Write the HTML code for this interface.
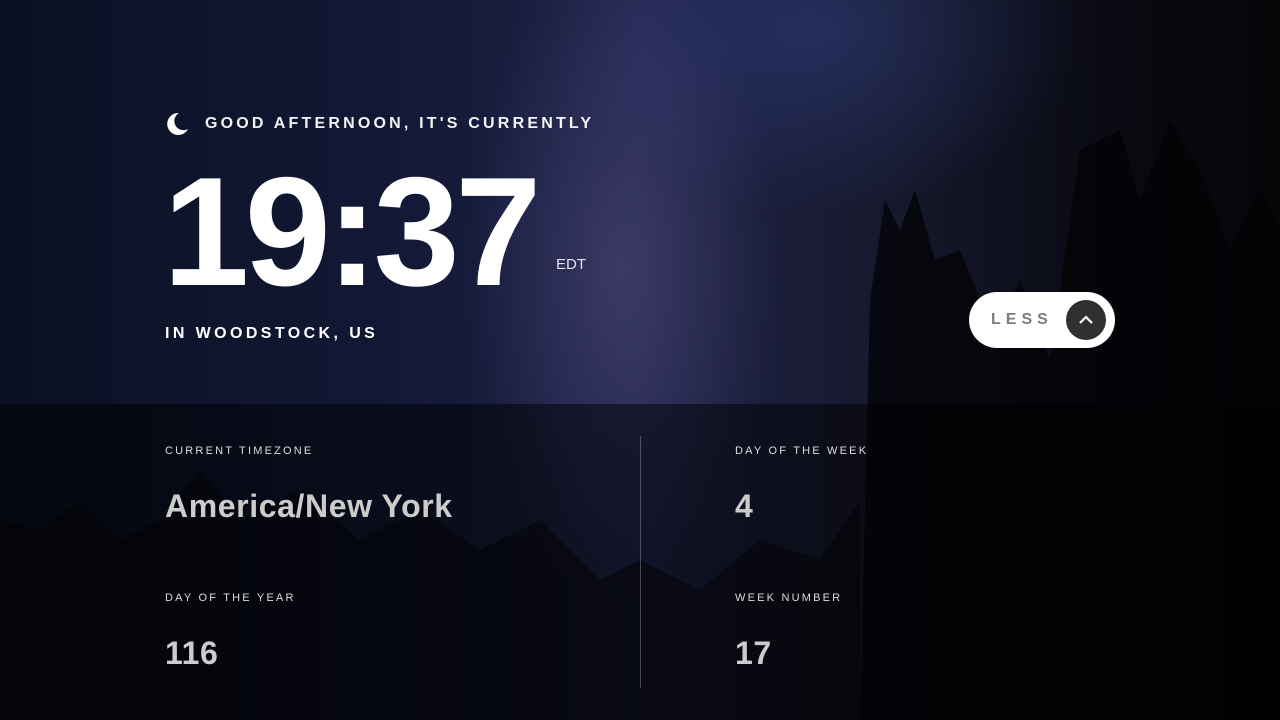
<!DOCTYPE html>
<html><head><style>
*{margin:0;padding:0;box-sizing:border-box}
body{width:1280px;height:720px;overflow:hidden;font-family:"Liberation Sans",sans-serif;color:#fff;position:relative;
background:
radial-gradient(ellipse 220px 480px at 620px 270px,rgba(110,100,160,.35),transparent 70%),
radial-gradient(ellipse 380px 260px at 820px 30px,rgba(50,70,140,.45),transparent 70%),
linear-gradient(90deg,#0a1022 0%,#141a38 35%,#20244a 50%,#16182c 70%,#0a0b14 85%,#060608 100%);}
.trees{position:absolute;left:0;top:0;width:1280px;height:720px}
.panel{position:absolute;left:0;top:404px;width:1280px;height:316px;background:rgba(0,0,0,.5)}
.greet{position:absolute;left:205px;top:115px;font-size:16px;letter-spacing:3.2px;font-weight:bold;opacity:.95}
.moon{position:absolute;left:165px;top:112px}
.time{position:absolute;left:163px;top:154px;font-size:155px;font-weight:bold;letter-spacing:-4.5px;line-height:155px}
.edt{position:absolute;left:556px;top:256px;font-size:15px;opacity:.85}
.loc{position:absolute;left:165px;top:325px;font-size:16px;font-weight:bold;letter-spacing:3.4px}
.btn{position:absolute;left:969px;top:292px;width:146px;height:56px;border-radius:28px;background:#fff}
.btn span{position:absolute;left:22px;top:19px;font-size:16px;font-weight:bold;letter-spacing:5px;color:#7d7d7d}
.btn i{position:absolute;left:97px;top:8px;width:40px;height:40px;border-radius:50%;background:#303030}
.lbl{position:absolute;font-size:11px;letter-spacing:2.2px;color:#ddd}
.val{position:absolute;font-size:32px;font-weight:bold;color:#ccc;letter-spacing:.6px}
.div{position:absolute;left:640px;top:436px;width:1px;height:252px;background:rgba(255,255,255,.25)}
</style></head><body>
<svg class="trees" viewBox="0 0 1280 720">
<g fill="#030305">
<path d="M860 720 L870 300 L885 200 L900 230 L915 190 L935 260 L960 250 L980 300 L1000 320 L1020 280 L1050 360 L1080 150 L1120 130 L1140 200 L1170 120 L1200 170 L1230 250 L1260 190 L1280 230 L1280 720Z" opacity=".75"/>
<path d="M0 520 L40 530 L80 500 L120 540 L160 520 L200 470 L240 520 L300 490 L360 540 L420 510 L480 550 L540 520 L600 580 L640 560 L700 590 L760 540 L820 560 L860 500 L860 720 L0 720Z" opacity=".5"/>
</g>
</svg>
<div class="panel"></div>
<svg class="moon" width="24" height="24" viewBox="0 0 24 24"><path d="M14 1 A11 11 0 1 0 23 17 A9 9 0 0 1 14 1Z" fill="#fff"/></svg>
<div class="greet">GOOD AFTERNOON, IT'S CURRENTLY</div>
<div class="time">19:37</div>
<div class="edt">EDT</div>
<div class="loc">IN WOODSTOCK, US</div>
<div class="btn"><span>LESS</span><i><svg width="40" height="40" viewBox="0 0 40 40"><path d="M14 23 L20 17 L26 23" stroke="#fff" stroke-width="2.2" fill="none"/></svg></i></div>
<div class="lbl" style="left:165px;top:445px">CURRENT TIMEZONE</div>
<div class="val" style="left:165px;top:488px">America/New York</div>
<div class="lbl" style="left:165px;top:592px">DAY OF THE YEAR</div>
<div class="val" style="left:165px;top:635px">116</div>
<div class="div"></div>
<div class="lbl" style="left:735px;top:445px">DAY OF THE WEEK</div>
<div class="val" style="left:735px;top:488px">4</div>
<div class="lbl" style="left:735px;top:592px">WEEK NUMBER</div>
<div class="val" style="left:735px;top:635px">17</div>
</body></html>
